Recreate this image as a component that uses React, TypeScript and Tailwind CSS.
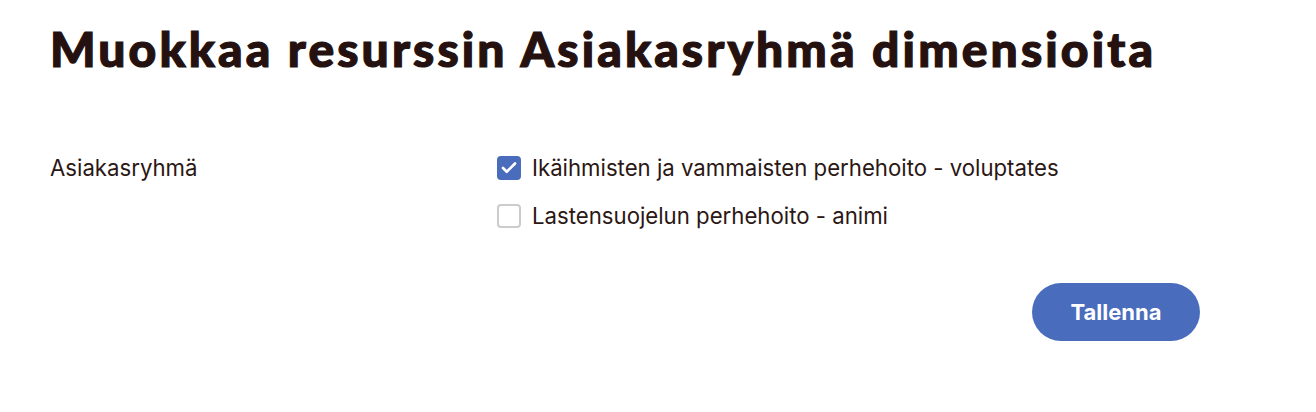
import { Check } from 'lucide-react';

const options = [
  { id: 'ikaihmiset', label: 'Ikäihmisten ja vammaisten perhehoito - voluptates', checked: true },
  { id: 'lastensuojelu', label: 'Lastensuojelun perhehoito - animi', checked: false },
];

export default function App() {
  return (
    <div className="min-h-[412px] bg-white px-[50px] pt-[21px] text-[#2b1714] [font-family:Inter,'Noto_Sans',sans-serif]">
      <h1 className="whitespace-nowrap text-[48px] leading-[56px] font-black tracking-[3.1px] text-[#241110] [-webkit-text-stroke:1.2px_#241110] [font-family:Lato,'Noto_Sans',sans-serif]">
        Muokkaa resurssin Asiakasryhmä dimensioita
      </h1>

      <div className="mt-[77px] flex w-[1150px]">
        <div className="w-[447px] text-[22.2px] leading-7">Asiakasryhmä</div>
        <div className="flex flex-col gap-5">
          {options.map((opt) => (
            <label key={opt.id} className="flex items-center gap-[11px] text-[22.2px] leading-7">
              {opt.checked ? (
                <span className="flex h-6 w-6 items-center justify-center rounded-[4px] bg-[#4a6cbd]">
                  <Check className="h-[18px] w-[18px] text-white" strokeWidth={3.5} />
                </span>
              ) : (
                <span className="h-6 w-6 rounded-[4px] border-2 border-[#cccccc] bg-white" />
              )}
              {opt.label}
            </label>
          ))}
        </div>
      </div>

      <div className="mt-[53px] flex w-[1150px] justify-end">
        <button className="h-[58px] w-[168px] rounded-full bg-[#4a6cbd] text-[22px] font-bold text-white">
          Tallenna
        </button>
      </div>
    </div>
  );
}
